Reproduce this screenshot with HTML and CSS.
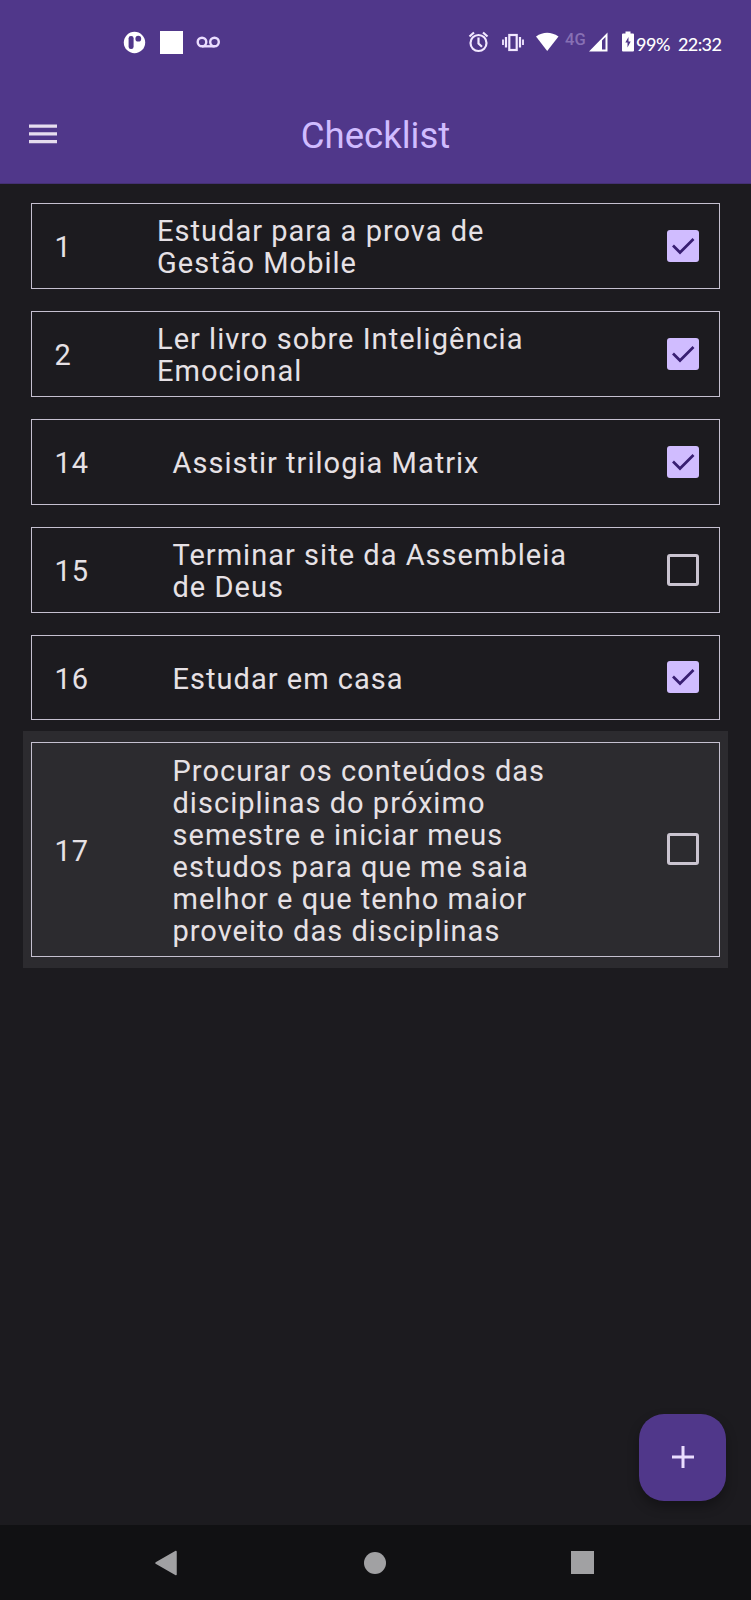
FILE: index.html
```html
<!DOCTYPE html>
<html lang="pt-BR">
<head>
<meta charset="utf-8">
<title>Checklist</title>
<link rel="stylesheet" href="styles.css">
</head>
<body>
<div class="screen">
  <header class="header">
    <div class="status">
      <svg class="status-left" width="100" height="30" viewBox="0 0 100 30" fill="#fff">
        <circle cx="11.5" cy="15.5" r="10.7"/>
        <rect x="5.6" y="9" width="5" height="13" rx="2.3" fill="#50378a"/>
        <circle cx="15.3" cy="11.7" r="2.9" fill="#50378a"/>
        <rect x="37" y="4" width="23" height="23"/>
        <g fill="none" stroke="#eaddff" stroke-width="2.4"><circle cx="79" cy="15" r="4.3"/><circle cx="91.500" cy="15" r="4.3"/><path d="M79 19.300h12.500"/></g>
      </svg>
      <div class="status-right">
        <svg width="120" height="30" viewBox="0 0 120 30" fill="#fff">
          <g fill="none" stroke="#f2e8ff" stroke-width="2.2"><circle cx="13.500" cy="16" r="8"/><path d="M13.500 10.500v6l3.500 3.200M4.500 9.500l4.500-4M18 5.500l4.500 4"/></g>
          <g fill="none" stroke="#f2e8ff" stroke-width="2.2"><rect x="44.300" y="8" width="7.400" height="15"/><path d="M41 10v10.500M55 10v10.500"/><path d="M38 12.500v5.500M58 12.500v5.500" stroke-width="1.800"/></g>
          <path d="M71 9.500q11-7.500 22.500 0L82.200 24Z"/>
        </svg>
        <span class="network">4G</span>
        <svg class="signal" width="20" height="30" viewBox="0 0 20 30" fill="#fff"><path fill-rule="evenodd" d="M0 24.500 18.500 5.500v19ZM13 13.500v9h3.500V10Z"/></svg>
        <svg class="battery" width="14" height="30" viewBox="0 0 14 30"><path fill="#fff" d="M4.500 4.500h5v2h2.500q1 0 1 1v16q0 1-1 1H2q-1 0-1-1v-16q0-1 1-1h2.500Z"/><path fill="#50378a" d="M7.500 10v4.500h2.200L6.500 20.500v-5H4.300Z"/></svg>
        <span class="percent">99%</span>
        <span class="clock">22:32</span>
      </div>
    </div>
    <div class="toolbar">
      <svg class="menu" width="28" height="20" viewBox="0 0 28 20"><path d="M0 2.200h28M0 9.900h28M0 17.600h28" stroke="#e6ddef" stroke-width="3.200"/></svg>
      <h1 class="title">Checklist</h1>
    </div>
  </header>
  <main class="list">
    <div class="item"><span class="num">1</span><p class="text">Estudar para a prova de<br>Gestão Mobile</p><span class="box checked"><svg width="32" height="32" viewBox="0 0 32 32"><path d="M6 15.500l7 7L26.500 9"/></svg></span></div>
    <div class="item"><span class="num">2</span><p class="text">Ler livro sobre Inteligência<br>Emocional</p><span class="box checked"><svg width="32" height="32" viewBox="0 0 32 32"><path d="M6 15.500l7 7L26.500 9"/></svg></span></div>
    <div class="item short wide"><span class="num">14</span><p class="text">Assistir trilogia Matrix</p><span class="box checked"><svg width="32" height="32" viewBox="0 0 32 32"><path d="M6 15.500l7 7L26.500 9"/></svg></span></div>
    <div class="item wide"><span class="num">15</span><p class="text">Terminar site da Assembleia<br>de Deus</p><span class="box"></span></div>
    <div class="item short wide"><span class="num">16</span><p class="text">Estudar em casa</p><span class="box checked"><svg width="32" height="32" viewBox="0 0 32 32"><path d="M6 15.500l7 7L26.500 9"/></svg></span></div>
    <div class="selected">
      <div class="item tall wide"><span class="num">17</span><p class="text">Procurar os conteúdos das<br>disciplinas do próximo<br>semestre e iniciar meus<br>estudos para que me saia<br>melhor e que tenho maior<br>proveito das disciplinas</p><span class="box"></span></div>
    </div>
  </main>
  <button class="fab" aria-label="Adicionar"><svg width="22" height="22" viewBox="0 0 22 22"><path d="M11 0v22M0 11h22" stroke="#eaddff" stroke-width="3"/></svg></button>
  <nav class="nav">
    <svg width="24" height="28" viewBox="0 0 24 28"><path d="M2 14 22 2.500v23Z" fill="#a1a1a3" stroke="#a1a1a3" stroke-width="1.500" stroke-linejoin="round"/></svg>
    <span class="home"></span>
    <span class="recent"></span>
  </nav>
</div>
</body>
</html>
```
FILE: styles.css
```css
* { box-sizing: border-box; }
body { margin: 0; background: #1c1b1f; font-family: Roboto, sans-serif; }
.screen { position: relative; display: flex; flex-direction: column; width: 751px; height: 1600px; overflow: hidden; background: #1c1b1f; }
.header { height: 184px; background: #50378a; border-bottom: 1px solid #443073; flex: none; }
.status { display: flex; justify-content: space-between; height: 86px; padding: 27px 0 0 123px; }
.status svg { flex: none; }
.status-right { display: flex; width: 286px; color: #fff; font-family: Lato, sans-serif; font-weight: 500; }
.status-right > svg:first-child { margin-right: -20px; }
.network { width: 23px; color: #8770b4; font: 500 16.5px/25px Roboto, sans-serif; }
.signal { margin-left: 1px; }
.battery { margin-left: 12px; }
.percent, .clock { font-size: 18px; line-height: 34px; white-space: nowrap; }
.percent { width: 42px; margin-left: 1px; letter-spacing: -0.5px; }
.clock { letter-spacing: -0.6px; }
.toolbar { display: grid; grid-template-columns: 130px 1fr 130px; align-items: center; height: 97px; }
.menu { margin-left: 29px; margin-top: -2px; }
.title { margin: 2px 0 0; text-align: center; color: #d0bcff; font-size: 36.5px; font-weight: 400; line-height: 44px; }
.list { display: flex; flex-direction: column; gap: 22px; padding: 19px 23px 0; flex: 1; }
.item { display: flex; align-items: center; height: 86px; margin: 0 8px; padding: 0 20px 0 22.5px; border: 1px solid #c5c0d0; color: #e6e1e5; font-size: 29px; line-height: 32px; letter-spacing: 1.02px; flex: none; }
.short { height: 85.5px; }
.num { width: 102.5px; padding-top: 1px; }
.wide .num { width: 118px; padding-top: 2.5px; }
.text { margin: 0; padding-top: 1px; flex: 1; white-space: nowrap; }
.wide .text { padding-top: 2.5px; }
.box { width: 32px; height: 32px; flex: none; border: 3px solid #cac4d0; border-radius: 3px; }
.checked { border: 0; background: #d0bcff; }
.checked svg { display: block; fill: none; stroke: #381e72; stroke-width: 2.700px; }
.selected { margin-top: -11px; padding: 11px 0; background: #2c2b2f; }
.tall { height: 214.5px; }
.fab { position: absolute; left: 639px; top: 1413.5px; display: grid; place-items: center; width: 87px; height: 87px; padding: 0; border: 0; border-radius: 25px; background: #50378a; box-shadow: 0 6px 12px rgba(0,0,0,.3); }
.nav { display: flex; justify-content: space-between; align-items: center; height: 75px; padding: 0 157.5px 0 154px; background: #111113; flex: none; }
.nav > * { flex: none; }
.home { width: 22px; height: 22px; border-radius: 50%; background: #a1a1a3; margin-left: 1.5px; }
.recent { width: 23px; height: 23px; background: #a1a1a3; }
```
